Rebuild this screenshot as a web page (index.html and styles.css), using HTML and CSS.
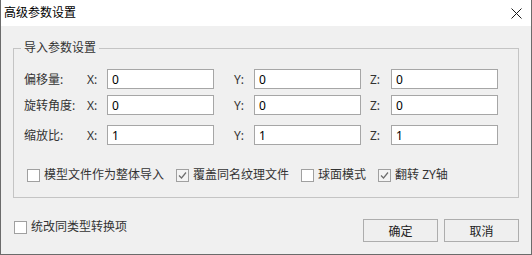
FILE: index.html
```html
<!DOCTYPE html>
<html lang="zh-CN">
<head>
    <meta charset="UTF-8">
    <title>高级参数设置</title>
    <link rel="stylesheet" href="styles.css">
</head>
<body>
    <div class="window">
        <div class="titlebar">
            <span class="title">高级参数设置</span>
            <svg class="close" width="11" height="11" viewBox="0 0 11 11">
                <path d="M0.5 0.5 L10.5 10.5 M10.5 0.5 L0.5 10.5" stroke="#1a1a1a" stroke-width="1" fill="none"/>
            </svg>
        </div>
        <div class="content">
            <fieldset class="group">
                <legend>导入参数设置</legend>
                <div class="group-body">
                    <div class="row">
                        <span class="row-label">偏移量:</span>
                        <span class="axis">X:</span>
                        <input class="field" type="text" value="0">
                        <span class="axis axis-y">Y:</span>
                        <input class="field" type="text" value="0">
                        <span class="axis axis-z">Z:</span>
                        <input class="field" type="text" value="0">
                    </div>
                    <div class="row row-rotate">
                        <span class="row-label">旋转角度:</span>
                        <span class="axis">X:</span>
                        <input class="field" type="text" value="0">
                        <span class="axis axis-y">Y:</span>
                        <input class="field" type="text" value="0">
                        <span class="axis axis-z">Z:</span>
                        <input class="field" type="text" value="0">
                    </div>
                    <div class="row row-scale">
                        <span class="row-label">缩放比:</span>
                        <span class="axis">X:</span>
                        <input class="field" type="text" value="1">
                        <span class="axis axis-y">Y:</span>
                        <input class="field" type="text" value="1">
                        <span class="axis axis-z">Z:</span>
                        <input class="field" type="text" value="1">
                    </div>
                    <div class="options">
                        <label class="check"><span class="box"></span>模型文件作为整体导入</label>
                        <label class="check"><span class="box checked"><svg width="11" height="11" viewBox="0 0 11 11"><path d="M2 5.5 L4.5 8 L9 2.5" stroke="#6e6e6e" stroke-width="1.2" fill="none"/></svg></span>覆盖同名纹理文件</label>
                        <label class="check"><span class="box"></span>球面模式</label>
                        <label class="check"><span class="box checked"><svg width="11" height="11" viewBox="0 0 11 11"><path d="M2 5.5 L4.5 8 L9 2.5" stroke="#6e6e6e" stroke-width="1.2" fill="none"/></svg></span>翻转 ZY轴</label>
                    </div>
                </div>
            </fieldset>
            <div class="footer">
                <label class="check check-all"><span class="box"></span>统改同类型转换项</label>
                <div class="buttons">
                    <button class="btn">确定</button>
                    <button class="btn">取消</button>
                </div>
            </div>
        </div>
    </div>
</body>
</html>
```

FILE: styles.css
```css
* {
    box-sizing: border-box;
}
body {
    margin: 0;
    padding: 0;
    font-family: "Noto Sans", "Noto Sans CJK SC", sans-serif;
    font-size: 12px;
    color: #333;
    background: #fff;
}
.window {
    width: 532px;
    height: 255px;
    border: 1px solid #6b6b6b;
    border-top: none;
    display: flex;
    flex-direction: column;
}
.titlebar {
    height: 26px;
    flex-shrink: 0;
    background: #fff;
    display: flex;
    align-items: center;
    justify-content: space-between;
    padding: 0 9px 0 3px;
    color: #000;
}
.title {
    line-height: 26px;
}
.close {
    display: block;
}
.content {
    flex: 1;
    background: #f0f0f0;
    overflow: hidden;
}
.group {
    margin: 15px 12px 0;
    padding: 0;
    border: 1px solid #c4c4c4;
    min-width: 0;
}
.group legend {
    margin-left: 7px;
    padding: 0 3px;
    line-height: 14px;
    color: #333;
}
.group-body {
    padding: 14px 0 15px 10px;
}
.row {
    display: flex;
    align-items: center;
    height: 20px;
    margin-bottom: 6px;
}
.row-rotate {
    margin-bottom: 10px;
}
.row-scale {
    margin-bottom: 23px;
}
.row-label {
    width: 63px;
}
.axis {
    width: 20px;
    color: #333;
}
.axis-y {
    width: 40px;
    padding-left: 20px;
}
.axis-z {
    width: 30px;
    padding-left: 9px;
}
.field {
    width: 107px;
    height: 20px;
    margin: 0;
    border: 1px solid #a6a6a6;
    background: #fff;
    padding: 0 4px;
    font-family: "Noto Sans", "Noto Sans CJK SC", sans-serif;
    font-size: 12px;
    color: #000;
    outline: none;
}
.options {
    display: flex;
    align-items: center;
    gap: 12px;
    padding-left: 3px;
    height: 14px;
}
.check {
    display: flex;
    align-items: center;
    gap: 4px;
    line-height: 14px;
    white-space: nowrap;
}
.box {
    width: 13px;
    height: 13px;
    border: 1px solid #a0a0a0;
    background: #fff;
    display: flex;
    align-items: center;
    justify-content: center;
}
.box.checked {
    background: #f4f4f4;
}
.box svg {
    display: block;
}
.footer {
    display: flex;
    justify-content: space-between;
    align-items: flex-start;
    padding: 21px 12px 0 13px;
}
.check-all {
    margin-top: 1px;
}
.buttons {
    display: flex;
    gap: 6px;
}
.btn {
    width: 75px;
    height: 23px;
    margin: 0;
    padding: 0;
    border: 1px solid #adadad;
    background: #efefef;
    font-family: "Noto Sans", "Noto Sans CJK SC", sans-serif;
    font-size: 12px;
    color: #222;
}
```
